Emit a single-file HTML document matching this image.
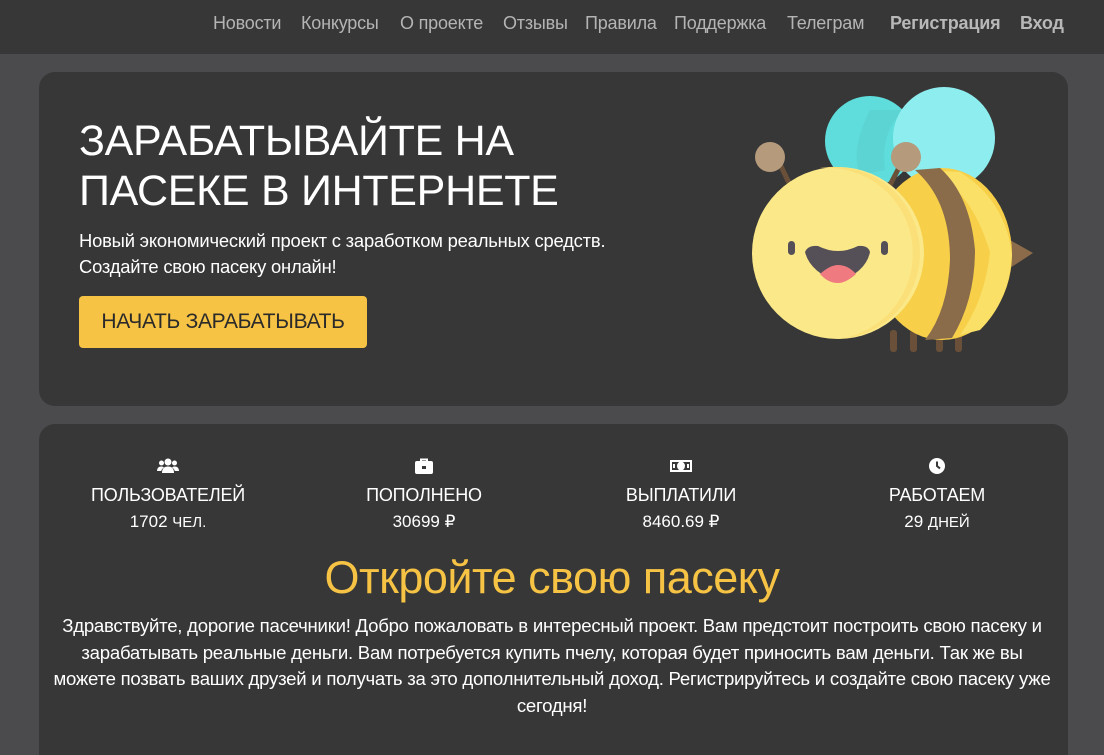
<!DOCTYPE html>
<html><head><meta charset="utf-8"><style>
*{margin:0;padding:0;box-sizing:border-box}
html,body{width:1104px;height:755px;overflow:hidden}
body{background:#4b4b4d;font-family:"Liberation Sans",sans-serif;color:#fff;position:relative}
.hdr{position:absolute;left:0;top:0;width:1104px;height:54px;background:#373737}
.nav{position:absolute;top:13px;font-size:18px;color:#b4b4b4;white-space:nowrap;letter-spacing:-0.2px}
.nav b{color:#b8b8b8}
.card{position:absolute;left:39px;width:1029px;background:#373737;border-radius:16px}
h1{position:absolute;left:79px;top:116px;font-size:43px;font-weight:400;line-height:50px;letter-spacing:-0.3px;white-space:nowrap}
.sub{position:absolute;left:79px;top:228px;font-size:18.4px;line-height:26px;letter-spacing:-0.2px;white-space:nowrap}
.btn{position:absolute;left:79px;top:296px;width:288px;height:52px;background:#f6c344;border-radius:4px;color:#2a2a2a;font-size:21px;line-height:52px;text-align:center;letter-spacing:-0.3px;white-space:nowrap}
.st{position:absolute;top:458px;width:220px;text-align:center;font-size:18px}
.st .l{margin-top:6px;letter-spacing:-0.2px}
.st .v{margin-top:6px;font-size:17px}
.st .v span{font-size:15px}
h2{position:absolute;left:0;width:1104px;top:552px;text-align:center;color:#f6c344;font-size:45px;font-weight:400;letter-spacing:-0.5px;white-space:nowrap}
.p{position:absolute;left:0;width:1104px;top:613px;text-align:center;font-size:18.6px;line-height:26.5px;letter-spacing:-0.25px;white-space:nowrap}
</style></head><body>
<div class="hdr"></div>
<div class="nav" style="left:213px">Новости</div>
<div class="nav" style="left:301px">Конкурсы</div>
<div class="nav" style="left:400px">О проекте</div>
<div class="nav" style="left:503px">Отзывы</div>
<div class="nav" style="left:585px">Правила</div>
<div class="nav" style="left:674px">Поддержка</div>
<div class="nav" style="left:787px">Телеграм</div>
<div class="nav" style="left:890px"><b>Регистрация</b></div>
<div class="nav" style="left:1020px"><b>Вход</b></div>

<div class="card" style="top:72px;height:334px"></div>
<div class="card" style="top:424px;height:360px"></div>

<h1>ЗАРАБАТЫВАЙТЕ НА<br>ПАСЕКЕ В ИНТЕРНЕТЕ</h1>
<div class="sub">Новый экономический проект с заработком реальных средств.<br>Создайте свою пасеку онлайн!</div>
<div class="btn">НАЧАТЬ ЗАРАБАТЫВАТЬ</div>

<svg style="position:absolute;left:740px;top:80px" width="310" height="280" viewBox="740 80 310 280">
 <circle cx="870" cy="141" r="45" fill="#5fdcdc"/>
 <path d="M905 110 Q880 130 885 170 L860 175 Q850 150 870 110Z" fill="#5ccfcf" opacity=".6"/>
 <circle cx="944" cy="138" r="51" fill="#8eeeef"/>
 <path d="M1010 240 L1033 253 L1010 268Z" fill="#8b6b4a"/>
 <g fill="#6a5038"><rect x="890" y="330" width="7" height="22" rx="3"/><rect x="910" y="330" width="7" height="22" rx="3"/><rect x="936" y="330" width="7" height="22" rx="3"/><rect x="955" y="330" width="7" height="22" rx="3"/></g>
 <ellipse cx="942" cy="254" rx="70" ry="86" fill="#f7cf48"/>
 <path d="M920 170 Q968 180 990 252 Q985 300 960 335 L980 330 Q1010 300 1012 254 Q1005 200 960 172Z" fill="#fbe067"/>
 <path d="M915 170 Q950 200 950 260 Q948 310 925 340 L952 338 Q975 300 975 250 Q970 195 940 168Z" fill="#8a6b4a"/>
 <line x1="778" y1="160" x2="790" y2="185" stroke="#6a5038" stroke-width="5"/>
 <line x1="904" y1="158" x2="890" y2="185" stroke="#6a5038" stroke-width="5"/>
 <circle cx="770" cy="157" r="15" fill="#b59a7c"/>
 <circle cx="906" cy="157" r="15" fill="#b59a7c"/>
 <circle cx="838" cy="253" r="86" fill="#fbe889"/>
 <path d="M820 168 A86 86 0 0 1 838 339 A86 86 0 0 0 920 253 A86 86 0 0 0 820 168Z" fill="#fbe07a"/>
 <rect x="788" y="241" width="7" height="14" rx="3.5" fill="#555058"/>
 <rect x="881" y="241" width="7" height="14" rx="3.5" fill="#555058"/>
 <path d="M805 252 Q808 245 818 246 Q828 251 838 251 Q848 251 858 246 Q868 245 870 252 Q866 272 838 282 Q810 272 805 252Z" fill="#555058"/>
 <path d="M820 274 Q830 265 838 265 Q848 265 856 274 Q846 283 838 283 Q828 283 820 274Z" fill="#ef7a80"/>
</svg>

<div class="st" style="left:58px">
 <svg width="22" height="16" viewBox="0 0 22 16"><circle cx="11" cy="4" r="3.5" fill="#fff"/><circle cx="4.5" cy="5" r="2.5" fill="#fff"/><circle cx="17.5" cy="5" r="2.5" fill="#fff"/><path d="M5 15 Q5 8.5 11 8.5 Q17 8.5 17 15Z" fill="#fff"/><path d="M0 13 Q0 8.5 4.5 8.5 Q6 8.5 7 9.5 Q4.5 11 4.3 13Z" fill="#fff"/><path d="M22 13 Q22 8.5 17.5 8.5 Q16 8.5 15 9.5 Q17.5 11 17.7 13Z" fill="#fff"/></svg>
 <div class="l">ПОЛЬЗОВАТЕЛЕЙ</div><div class="v">1702 <span>ЧЕЛ.</span></div></div>
<div class="st" style="left:314px">
 <svg width="18" height="16" viewBox="0 0 18 16"><path d="M6 3V1.5h6V3" stroke="#fff" stroke-width="2" fill="none"/><rect x="0" y="3" width="18" height="13" rx="2" fill="#fff"/><rect x="7" y="8" width="4" height="3" fill="#373737"/></svg>
 <div class="l">ПОПОЛНЕНО</div><div class="v">30699 ₽</div></div>
<div class="st" style="left:571px">
 <svg width="22" height="16" viewBox="0 0 22 16"><rect x="0" y="2" width="22" height="12" fill="#fff"/><rect x="2" y="4" width="18" height="8" fill="#373737"/><ellipse cx="11" cy="8" rx="4" ry="4.5" fill="#fff"/><rect x="3" y="6" width="2" height="4" fill="#fff"/><rect x="17" y="6" width="2" height="4" fill="#fff"/></svg>
 <div class="l">ВЫПЛАТИЛИ</div><div class="v">8460.69 ₽</div></div>
<div class="st" style="left:827px">
 <svg width="16" height="16" viewBox="0 0 16 16"><circle cx="8" cy="8" r="8" fill="#fff"/><path d="M8 3.5V8l3 2.5" stroke="#373737" stroke-width="2" fill="none"/></svg>
 <div class="l">РАБОТАЕМ</div><div class="v">29 <span>ДНЕЙ</span></div></div>

<h2>Откройте свою пасеку</h2>
<div class="p">Здравствуйте, дорогие пасечники! Добро пожаловать в интересный проект. Вам предстоит построить свою пасеку и<br>зарабатывать реальные деньги. Вам потребуется купить пчелу, которая будет приносить вам деньги. Так же вы<br>можете позвать ваших друзей и получать за это дополнительный доход. Регистрируйтесь и создайте свою пасеку уже<br>сегодня!</div>
</body></html>
